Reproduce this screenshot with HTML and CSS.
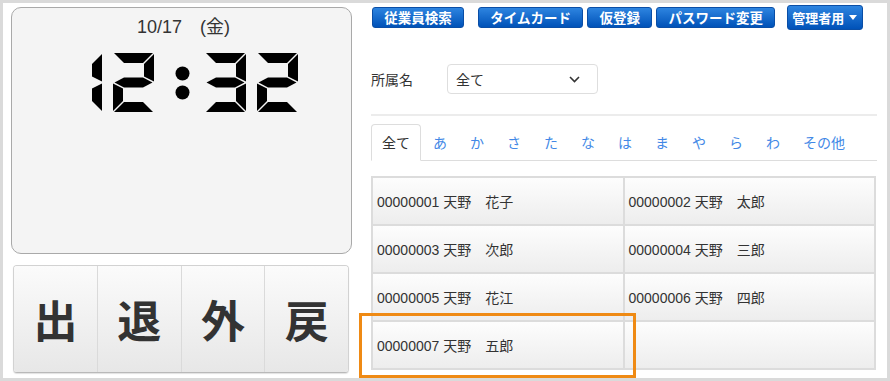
FILE: index.html
```html
<!DOCTYPE html>
<html lang="ja">
<head>
<meta charset="utf-8">
<link rel="stylesheet" href="styles.css">
</head>
<body>
<div class="frame">
  <div class="left">
    <div class="clock">
      <div class="date">10/17　(金)</div>
      <svg class="digits" width="339" height="60" viewBox="0 0 339 60">
        <defs>
          <polygon id="sa" points="1,0 40,0 30,10 11,10"/>
          <polygon id="sb" points="41,1 41,28.5 31,23.5 31,11"/>
          <polygon id="sc" points="41,30.5 41,58 31,48 31,35.5"/>
          <polygon id="sd" points="11,49 30,49 40,59 1,59"/>
          <polygon id="se" points="0,30.5 10,35.5 10,48 0,58"/>
          <polygon id="sf" points="0,1 10,11 10,23.5 0,28.5"/>
          <polygon id="sg" points="1.5,29.5 11,24.5 30,24.5 39.5,29.5 30,34.5 11,34.5"/>
        </defs>
        <g fill="#000">
          <g transform="translate(49,0)"><use href="#sb"/><use href="#sc"/></g>
          <g transform="translate(101,0)"><use href="#sa"/><use href="#sb"/><use href="#sg"/><use href="#se"/><use href="#sd"/></g>
          <circle cx="170.5" cy="20.5" r="7"/>
          <circle cx="170.5" cy="39.5" r="7"/>
          <g transform="translate(193,0)"><use href="#sa"/><use href="#sb"/><use href="#sg"/><use href="#sc"/><use href="#sd"/></g>
          <g transform="translate(245,0)"><use href="#sa"/><use href="#sb"/><use href="#sg"/><use href="#se"/><use href="#sd"/></g>
        </g>
      </svg>
    </div>
    <div class="punch">
      <button class="pbtn">出</button>
      <button class="pbtn">退</button>
      <button class="pbtn">外</button>
      <button class="pbtn">戻</button>
    </div>
  </div>
  <div class="right">
    <nav class="topnav">
      <a class="nbtn first">従業員検索</a>
      <a class="nbtn wide-gap">タイムカード</a>
      <a class="nbtn">仮登録</a>
      <a class="nbtn">パスワード変更</a>
      <a class="nbtn admin">管理者用<span class="caret"></span></a>
    </nav>
    <div class="filter">
      <span class="flabel">所属名</span>
      <div class="select">
        <span>全て</span>
        <svg class="chev" width="11" height="7" viewBox="0 0 11 7"><polyline points="1,1 5.5,5.5 10,1" fill="none" stroke="#333" stroke-width="1.6"/></svg>
      </div>
    </div>
    <div class="sep"></div>
    <ul class="tabs">
      <li class="tab active">全て</li>
      <li class="tab">あ</li>
      <li class="tab">か</li>
      <li class="tab">さ</li>
      <li class="tab">た</li>
      <li class="tab">な</li>
      <li class="tab">は</li>
      <li class="tab">ま</li>
      <li class="tab">や</li>
      <li class="tab">ら</li>
      <li class="tab">わ</li>
      <li class="tab">その他</li>
    </ul>
    <div class="grid">
      <div class="cell">00000001 天野　花子</div>
      <div class="cell">00000002 天野　太郎</div>
      <div class="cell">00000003 天野　次郎</div>
      <div class="cell">00000004 天野　三郎</div>
      <div class="cell">00000005 天野　花江</div>
      <div class="cell">00000006 天野　四郎</div>
      <div class="cell marked">00000007 天野　五郎<span class="highlight"></span></div>
      <div class="cell"></div>
    </div>
  </div>
</div>
</body>
</html>
```
FILE: styles.css
```css
* { box-sizing: border-box; }
html, body { margin: 0; padding: 0; background: #fff; }
body {
  font-family: "Liberation Sans", "Noto Sans CJK JP", sans-serif;
  color: #333;
}
.frame {
  width: 890px;
  height: 381px;
  border: 3px solid #dadada;
  display: flex;
  padding: 2px 10px 0 8px;
  overflow: hidden;
}
.left {
  width: 341px;
  flex-shrink: 0;
  padding-top: 2px;
}
.clock {
  height: 247px;
  border: 1px solid #a9a9a9;
  border-radius: 10px;
  background: #f4f4f4;
  padding-top: 8px;
}
.date {
  font-size: 18px;
  line-height: 22px;
  text-align: center;
  color: #333;
  padding-left: 4px;
}
.digits {
  display: block;
  margin-top: 15px;
}
.punch {
  margin: 11px 0 0 2px;
  width: 336px;
  height: 108px;
  display: flex;
  border: 1px solid #d2d2d2;
  border-bottom-color: #b9b9b9;
  border-radius: 4px;
  overflow: hidden;
  box-shadow: 0 1px 1px rgba(0,0,0,0.12);
}
.pbtn {
  flex: 1;
  border: 0;
  border-right: 1px solid #dadada;
  background: linear-gradient(#fbfbfb, #e7e7e7);
  font-family: "Noto Sans CJK JP", sans-serif;
  font-weight: 700;
  font-size: 44px;
  color: #333;
  padding: 0;
}
.pbtn:last-child { border-right: 0; }
.right {
  margin-left: 19px;
  flex: 1;
  min-width: 0;
}
.topnav {
  display: flex;
  align-items: center;
  height: 25px;
}
.nbtn {
  height: 21px;
  line-height: 19px;
  padding: 0 11.25px;
  font-family: "Noto Sans CJK JP", sans-serif;
  font-size: 13.5px;
  font-weight: 700;
  color: #fff;
  background: linear-gradient(#2d84e0, #0052b8);
  border: 1px solid #0a4ea6;
  border-radius: 3px;
  margin-left: 4px;
  white-space: nowrap;
}
.nbtn.first { margin-left: 1px; }
.nbtn.wide-gap { margin-left: 14px; }
.nbtn.admin {
  height: 25px;
  line-height: 23px;
  margin-left: 12px;
  padding: 0 5px 0 4px;
  font-size: 13px;
  display: flex;
  align-items: center;
}
.caret {
  display: inline-block;
  width: 0;
  height: 0;
  border-top: 5px solid #fff;
  border-left: 4px solid transparent;
  border-right: 4px solid transparent;
  margin-left: 5px;
}
.filter {
  margin-top: 34px;
  display: flex;
  align-items: center;
  height: 30px;
  font-size: 14px;
}
.flabel {
  width: 76px;
  font-family: "Noto Sans CJK JP", sans-serif;
}
.select {
  width: 151px;
  height: 30px;
  border: 1px solid #dedede;
  border-radius: 4px;
  display: flex;
  align-items: center;
  justify-content: space-between;
  padding: 0 17px 0 8px;
  font-family: "Noto Sans CJK JP", sans-serif;
}
.chev { display: block; }
.sep {
  margin-top: 20px;
  height: 2px;
  background: #ececec;
}
.tabs {
  list-style: none;
  margin: 8px 0 0;
  padding: 0;
  display: flex;
  border-bottom: 1px solid #dddddd;
  font-family: "Noto Sans CJK JP", sans-serif;
  font-size: 14px;
}
.tab {
  height: 37px;
  line-height: 35px;
  padding: 0 10px;
  border: 1px solid transparent;
  margin-right: 1px;
  margin-bottom: -1px;
  color: #4288e6;
}
.tab.active {
  color: #333;
  background: #fff;
  border-color: #dddddd #dddddd #fff;
  border-radius: 4px 4px 0 0;
}
.grid {
  margin-top: 15px;
  display: grid;
  grid-template-columns: 1fr 1fr;
  grid-auto-rows: 46px;
  gap: 2px;
  border: 2px solid #dcdcdc;
  background: #dcdcdc;
  width: 505px;
}
.cell {
  position: relative;
  background: linear-gradient(#fdfdfd, #ededed);
  display: flex;
  align-items: center;
  padding-left: 4px;
  font-size: 14px;
  color: #333;
  white-space: nowrap;
}
.highlight {
  position: absolute;
  top: -9px;
  bottom: -10px;
  left: -14px;
  right: -13px;
  border: 3px solid #ef8a14;
  pointer-events: none;
  z-index: 2;
}
```
